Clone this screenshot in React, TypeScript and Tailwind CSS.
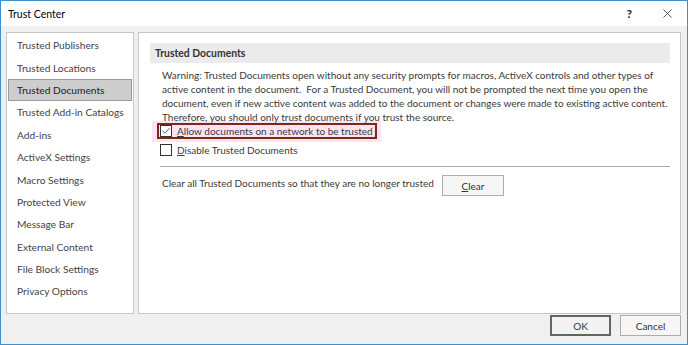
import { Check, X } from "lucide-react";

const items = [
  "Trusted Publishers",
  "Trusted Locations",
  "Trusted Documents",
  "Trusted Add-in Catalogs",
  "Add-ins",
  "ActiveX Settings",
  "Macro Settings",
  "Protected View",
  "Message Bar",
  "External Content",
  "File Block Settings",
  "Privacy Options",
];

export default function App() {
  return (
    <div
      className="w-[688px] h-[345px] flex flex-col bg-[#f0f0f0] border border-[#3c8fd0] text-[10px] leading-[14px] text-[#333] whitespace-nowrap"
      style={{ fontFamily: 'Lato, "Liberation Sans", sans-serif' }}
    >
      {/* title bar */}
      <div className="h-[25px] bg-white flex items-center pl-[7px] pr-[12px] shrink-0">
        <span className="text-[#000] text-[10.5px] flex-1">Trust Center</span>
        <span className="text-[12px] text-[#222] mr-[28px] font-bold">?</span>
        <X size={15} strokeWidth={1.2} className="text-[#222]" />
      </div>

      <div className="flex-1 flex gap-[4px] px-[5px] pt-[6px]">
        {/* sidebar */}
        <div className="w-[128px] h-[282px] bg-white border border-[#c6c6c6] py-[1px] flex flex-col text-[10.2px]">
          {items.map((it) => (
            <div
              key={it}
              className={
                it === "Trusted Documents"
                  ? "h-[22.4px] mx-[1px] flex items-center pl-[8px] bg-[#cdcdcd] border border-[#9a9a9a] text-[#222]"
                  : "h-[22.4px] mx-[1px] flex items-center pl-[9px] text-[#444]"
              }
            >
              {it}
            </div>
          ))}
        </div>

        {/* content */}
        <div className="flex-1 h-[282px] mr-[1px] bg-white border border-[#c6c6c6] pt-[10px] pl-[11px] pr-[10px]">
          <div className="h-[20px] bg-[#ebebeb] flex items-center pl-[5px] font-bold text-[10.4px] text-[#333]">
            Trusted Documents
          </div>
          <div className="pl-[12px] pt-[5px] text-[#3a3a3a]">
            <p>
              Warning: Trusted Documents open without any security prompts for macros, ActiveX controls and other types of
              <br />
              active content in the document.&nbsp; For a Trusted Document, you will not be prompted the next time you open the
              <br />
              document, even if new active content was added to the document or changes were made to existing active content.
              <br />
              Therefore, you should only trust documents if you trust the source.
            </p>
          </div>
          <div className="ml-[2px] -mt-[3px] w-[229px] pl-[5px] pt-[2px] pb-[3px] bg-[#fbe3f3]">
            <div className="h-[16px] border-2 border-[#7a2a14] flex items-center pl-[1px] gap-[5px] w-[220px]">
              <div className="w-[12px] h-[12px] border border-[#333] flex items-center justify-center bg-white">
                <Check size={10} strokeWidth={2} className="text-[#333]" />
              </div>
              <span className="text-[#3a3a3a]">
                <u>A</u>llow documents on a network to be trusted
              </span>
            </div>
          </div>
          <div className="h-[15px] flex items-center ml-[10px] gap-[5px]">
            <div className="w-[12px] h-[12px] border border-[#333] bg-white" />
            <span className="text-[#3a3a3a]">
              <u>D</u>isable Trusted Documents
            </span>
          </div>
          <div className="ml-[10px] mt-[9px] border-t border-[#a8a8a8]" />
          <div className="ml-[12px] mt-[8px] flex items-start">
            <span className="text-[#3a3a3a] w-[280px] mt-[1px]">
              Clear all Trusted Documents so that they are no longer trusted
            </span>
            <button className="w-[62px] h-[21px] border border-[#adadad] bg-[#f6f6f6] text-[#333]">
              <u>C</u>lear
            </button>
          </div>
        </div>
      </div>

      {/* footer */}
      <div className="h-[29px] flex justify-end items-start gap-[9px] pr-[6px] shrink-0">
        <button className="w-[61px] h-[21px] border-2 border-[#5a6b5a] bg-[#f3f3f3] text-[#333]">
          OK
        </button>
        <button className="w-[61px] h-[21px] border border-[#adadad] bg-[#f6f6f6] text-[#333]">
          Cancel
        </button>
      </div>
    </div>
  );
}
